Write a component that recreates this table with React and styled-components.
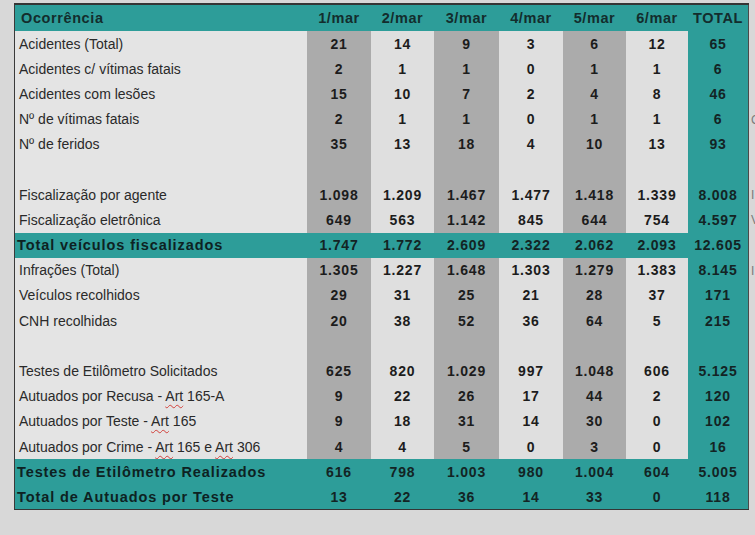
import React from "react";
import styled, { createGlobalStyle } from "styled-components";

const days = ["1/mar", "2/mar", "3/mar", "4/mar", "5/mar", "6/mar", "TOTAL"];
const widths = [64, 63, 65, 64, 63, 62, 60];

const rows = [
  { label: "Acidentes (Total)", v: ["21", "14", "9", "3", "6", "12", "65"] },
  { label: "Acidentes c/ vítimas fatais", v: ["2", "1", "1", "0", "1", "1", "6"] },
  { label: "Acidentes com lesões", v: ["15", "10", "7", "2", "4", "8", "46"] },
  { label: "Nº de vítimas fatais", v: ["2", "1", "1", "0", "1", "1", "6"], note: "C" },
  { label: "Nº de feridos", v: ["35", "13", "18", "4", "10", "13", "93"] },
  { blank: true },
  { label: "Fiscalização por agente", v: ["1.098", "1.209", "1.467", "1.477", "1.418", "1.339", "8.008"], note: "I" },
  { label: "Fiscalização eletrônica", v: ["649", "563", "1.142", "845", "644", "754", "4.597"], note: "V" },
  { label: "Total veículos fiscalizados", v: ["1.747", "1.772", "2.609", "2.322", "2.062", "2.093", "12.605"], total: true },
  { label: "Infrações (Total)", v: ["1.305", "1.227", "1.648", "1.303", "1.279", "1.383", "8.145"], note: "I" },
  { label: "Veículos recolhidos", v: ["29", "31", "25", "21", "28", "37", "171"] },
  { label: "CNH recolhidas", v: ["20", "38", "52", "36", "64", "5", "215"] },
  { blank: true },
  { label: "Testes de Etilômetro Solicitados", v: ["625", "820", "1.029", "997", "1.048", "606", "5.125"] },
  { label: "Autuados por Recusa - Art 165-A", v: ["9", "22", "26", "17", "44", "2", "120"] },
  { label: "Autuados por Teste - Art 165", v: ["9", "18", "31", "14", "30", "0", "102"] },
  { label: "Autuados por Crime - Art 165 e Art 306", v: ["4", "4", "5", "0", "3", "0", "16"] },
  { label: "Testes de Etilômetro Realizados", v: ["616", "798", "1.003", "980", "1.004", "604", "5.005"], total: true },
  { label: "Total de Autuados por Teste", v: ["13", "22", "36", "14", "33", "0", "118"], total: true },
];

// column tone: total column teal, alternating greys for the days
const toneOf = (i) => (i === 6 ? "teal" : i % 2 === 0 ? "dark" : "light");

const tones = {
  teal: "#2d9d99",
  dark: "#ababab",
  light: "#dfdfdf",
  label: "#e4e4e4",
};

const GlobalStyle = createGlobalStyle`
  body {
    margin: 0;
    background: #d8d8d8;
    font-family: "Liberation Sans", Arial, sans-serif;
    overflow: hidden;
  }
`;

const Page = styled.div`
  display: flex;
  align-items: flex-start;
  padding: 3px 0 0 14px;
  width: 755px;
  height: 535px;
  box-sizing: border-box;
  overflow: hidden;
`;

const Sheet = styled.table`
  border-collapse: collapse;
  table-layout: fixed;
  width: 733px;
  border-left: 1px solid #3a3a3a;
  border-top: 2px solid #353535;
  border-right: 1px solid #4a4a4a;
  border-bottom: 1px solid #353535;
  flex-shrink: 0;
`;

const HeadRow = styled.tr`
  height: 27px;
  background: ${tones.teal};
`;

const Row = styled.tr`
  height: 25.2px;
`;

const HeadCell = styled.th`
  width: ${(p) => p.$w}px;
  padding: ${(p) => (p.$left ? "0 0 0 6px" : "0")};
  text-align: ${(p) => (p.$left ? "left" : "center")};
  font-size: 14.5px;
  font-weight: 700;
  letter-spacing: 0.6px;
  color: #132d2d;
  white-space: nowrap;
`;

const Label = styled.td`
  padding: 0 0 0 ${(p) => (p.$total ? "2px" : "4px")};
  background: ${(p) => (p.$total ? tones.teal : tones.label)};
  font-size: ${(p) => (p.$total ? "14.5px" : "14px")};
  font-weight: ${(p) => (p.$total ? 700 : 400)};
  letter-spacing: ${(p) => (p.$total ? "0.9px" : "0")};
  color: ${(p) => (p.$total ? "#0d2222" : "#2a2a2a")};
  white-space: nowrap;
  overflow: hidden;
`;

const Num = styled.td`
  padding: 0;
  text-align: center;
  background: ${(p) => (p.$total ? tones.teal : tones[p.$tone])};
  font-size: 14px;
  font-weight: 700;
  letter-spacing: 0.8px;
  color: ${(p) => (p.$total || p.$tone === "teal" ? "#132424" : "#1c1c1c")};
  white-space: nowrap;
`;

const Spell = styled.span`
  text-decoration: underline wavy #d2403a;
  text-decoration-thickness: 1px;
  text-underline-offset: 3px;
`;

const Notes = styled.div`
  display: flex;
  flex-direction: column;
  padding-top: 29px;
  flex-shrink: 0;
`;

const Note = styled.div`
  height: 25.2px;
  line-height: 25.2px;
  padding-left: 2px;
  font-size: 12px;
  color: #7a7a7a;
  white-space: nowrap;
`;

const renderLabel = (text) =>
  text.split(/(Art)/).map((part, i) =>
    part === "Art" ? <Spell key={i}>Art</Spell> : <React.Fragment key={i}>{part}</React.Fragment>
  );

export default function App() {
  return (
    <>
      <GlobalStyle />
      <Page>
        <Sheet>
          <thead>
            <HeadRow>
              <HeadCell $w={286} $left>
                Ocorrência
              </HeadCell>
              {days.map((d, i) => (
                <HeadCell key={d} $w={widths[i]}>
                  {d}
                </HeadCell>
              ))}
            </HeadRow>
          </thead>
          <tbody>
            {rows.map((r, ri) =>
              r.blank ? (
                <Row key={ri}>
                  <Label />
                  {days.map((d, i) => (
                    <Num key={d} $tone={toneOf(i)} />
                  ))}
                </Row>
              ) : (
                <Row key={ri}>
                  <Label $total={r.total}>{renderLabel(r.label)}</Label>
                  {r.v.map((val, i) => (
                    <Num key={i} $tone={toneOf(i)} $total={r.total}>
                      {val}
                    </Num>
                  ))}
                </Row>
              )
            )}
          </tbody>
        </Sheet>
        <Notes>
          {rows.map((r, i) => (
            <Note key={i}>{r.note || "\u00a0"}</Note>
          ))}
        </Notes>
      </Page>
    </>
  );
}
